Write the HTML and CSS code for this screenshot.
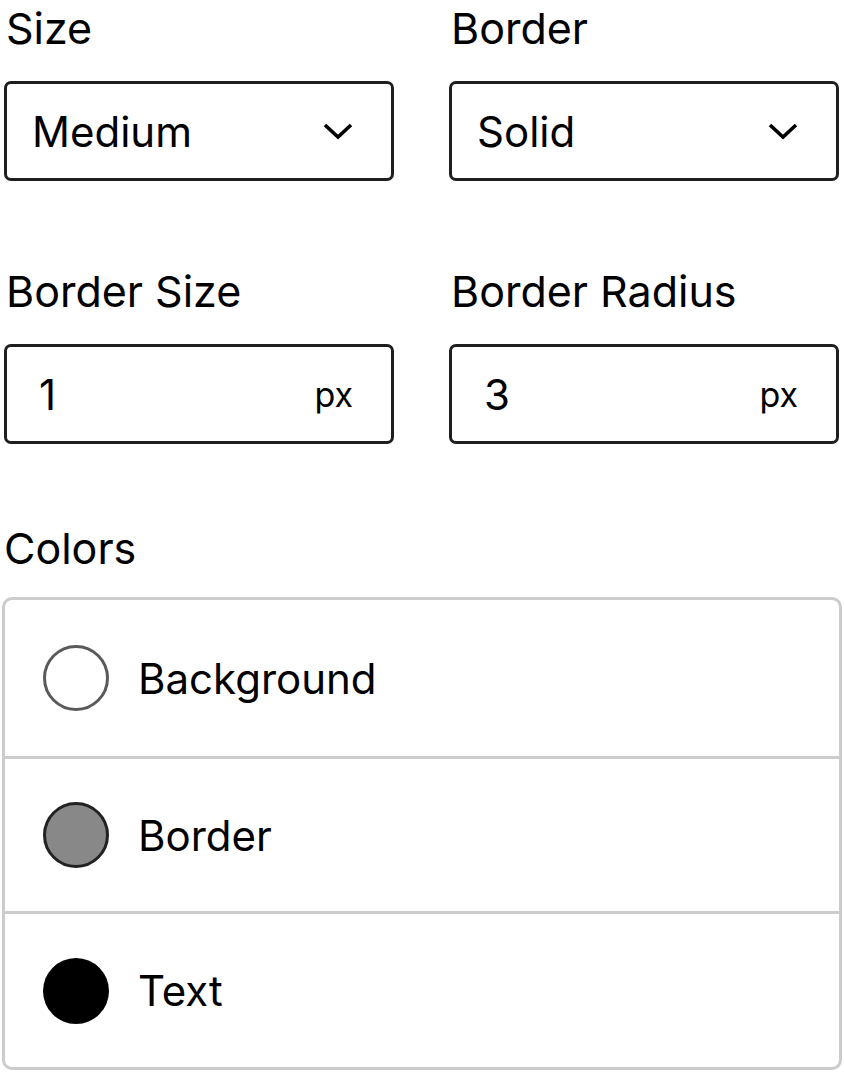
FILE: index.html
```html
<!DOCTYPE html>
<html lang="en">
  <head>
    <meta charset="UTF-8" />
    <meta name="viewport" content="width=device-width, initial-scale=1.0" />
    <title>Button Settings</title>
    <link rel="stylesheet" href="styles.css">
  </head>
  <body>
    <div class="panel">
      <div class="grid">
        <div class="field">
          <label class="label">Size</label>
          <div class="control">
            <span class="value">Medium</span>
            <svg class="chevron" viewBox="0 0 30 17" width="30" height="17">
              <path d="M2 2 L15 14 L28 2" fill="none" stroke="#000" stroke-width="3.6" />
            </svg>
          </div>
        </div>
        <div class="field">
          <label class="label">Border</label>
          <div class="control">
            <span class="value">Solid</span>
            <svg class="chevron" viewBox="0 0 30 17" width="30" height="17">
              <path d="M2 2 L15 14 L28 2" fill="none" stroke="#000" stroke-width="3.6" />
            </svg>
          </div>
        </div>
        <div class="field">
          <label class="label">Border Size</label>
          <div class="control number">
            <span class="value">1</span>
            <span class="unit">px</span>
          </div>
        </div>
        <div class="field">
          <label class="label">Border Radius</label>
          <div class="control number">
            <span class="value">3</span>
            <span class="unit">px</span>
          </div>
        </div>
      </div>

      <div class="colors">
        <label class="label">Colors</label>
        <div class="color-list">
          <div class="color-row first">
            <span class="swatch swatch-bg"></span>
            <span class="color-name">Background</span>
          </div>
          <div class="color-row">
            <span class="swatch swatch-border"></span>
            <span class="color-name">Border</span>
          </div>
          <div class="color-row last">
            <span class="swatch swatch-text"></span>
            <span class="color-name">Text</span>
          </div>
        </div>
      </div>
    </div>
  </body>
</html>
```

FILE: styles.css
```css
body {
  margin: 0;
  background: #fff;
  color: #000;
  font-family: Inter, "Noto Sans", sans-serif;
}

.panel {
  width: 840px;
  padding: 0 2px 0 2px;
}

.grid {
  display: grid;
  grid-template-columns: 390px 390px;
  column-gap: 55px;
  row-gap: 82px;
  padding-left: 2px;
}

.field {
  display: flex;
  flex-direction: column;
  gap: 25px;
}

.label {
  display: block;
  font-size: 43px;
  line-height: 56px;
  padding-left: 2px;
}

.control {
  box-sizing: border-box;
  height: 100px;
  border: 3px solid #1e1e1e;
  border-radius: 7px;
  display: flex;
  align-items: center;
  justify-content: space-between;
  padding: 0 38px 0 25px;
  font-size: 42px;
}

.control.number {
  padding: 0 38px 0 32px;
}

.unit {
  font-size: 34px;
}

.chevron {
  display: block;
}

.colors {
  margin-top: 76px;
}

.colors .label {
  margin-bottom: 21px;
}

.color-list {
  border: 3px solid #ccc;
  border-radius: 10px;
}

.color-row {
  height: 152px;
  display: flex;
  align-items: center;
  gap: 29px;
  padding-left: 38px;
  border-top: 3px solid #ccc;
}

.color-row.first {
  height: 156px;
  border-top: none;
}

.color-row.last {
  height: 153px;
}

.swatch {
  box-sizing: border-box;
  width: 66px;
  height: 66px;
  border-radius: 50%;
}

.swatch-bg {
  background: #fff;
  border: 3px solid #5a5a5a;
}

.swatch-border {
  background: #888;
  border: 3px solid #222;
}

.swatch-text {
  background: #000;
}

.color-name {
  font-size: 42px;
}
```
